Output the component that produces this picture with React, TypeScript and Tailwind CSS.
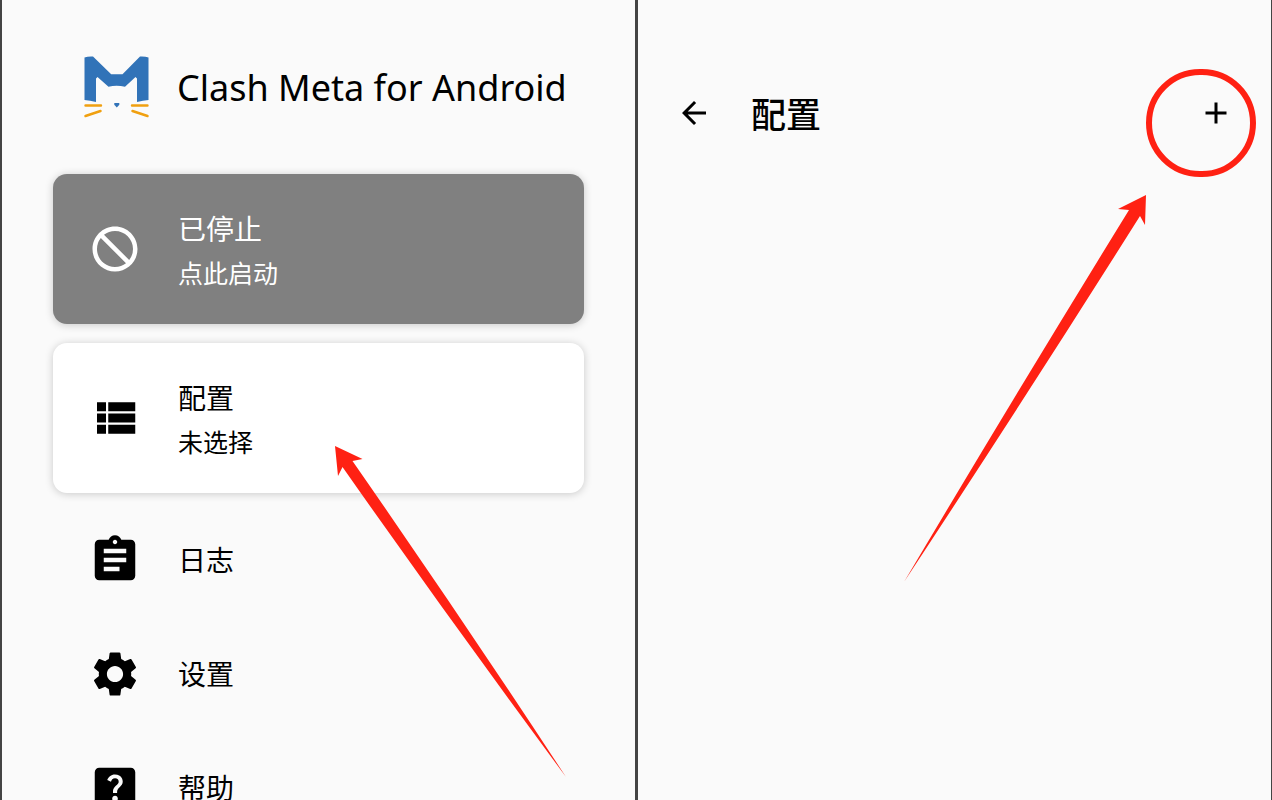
import type { ReactNode } from "react";
import { MdArrowBack, MdAdd, MdBlock, MdHelpCenter, MdSettings } from "react-icons/md";

type IconProps = { className?: string };

type MenuItem = {
  label: string;
  icon: React.ComponentType<IconProps>;
};

function StoppedIcon({ className = "" }: IconProps) {
  return <MdBlock className={`-scale-x-100 ${className}`} aria-hidden="true" />;
}

function ProfilesIcon({ className }: IconProps) {
  return (
    <svg viewBox="0 0 24 24" className={className} fill="currentColor" aria-hidden="true">
      <path d="M4 14h4v-4H4v4zm0 5h4v-4H4v4zM4 9h4V5H4v4zm5 5h12v-4H9v4zm0 5h12v-4H9v4zM9 5v4h12V5H9z" />
    </svg>
  );
}

function LogsIcon({ className }: IconProps) {
  return (
    <svg viewBox="0 0 24 24" className={className} fill="currentColor" aria-hidden="true">
      <path d="M19 3h-4.180C14.400 1.840 13.300 1 12 1c-1.300 0-2.400.840-2.820 2H5c-1.100 0-2 .900-2 2v14c0 1.100.900 2 2 2h14c1.100 0 2-.900 2-2V5c0-1.100-.900-2-2-2zm-7 0c.550 0 1 .450 1 1s-.450 1-1 1-1-.450-1-1 .450-1 1-1zm2 14H7v-2h7v2zm3-4H7v-2h10v2zm0-4H7V7h10v2z" />
    </svg>
  );
}

const MENU: MenuItem[] = [
  { label: "日志", icon: LogsIcon },
  { label: "设置", icon: MdSettings },
  { label: "帮助", icon: MdHelpCenter },
];

function Logo() {
  return (
    <svg viewBox="0 0 65 64" className="h-16 w-[65px] shrink-0" aria-hidden="true">
      <path
        d="M0.5 2.500 Q4 1.300 9 1.600 L27.200 19.300 H38.500 L56 1.600 Q61 1.300 64.500 2.500 V45 Q59 45.500 53 47 V23.500 L51.500 22 L41 31.800 Q32.500 29.500 24.500 31.800 L13.500 22 L12 23.500 V47 Q6 45.500 0.500 45 Z"
        fill="#3173b8"
      />
      <path d="M30.300 48 h5 v1.800 l-2.500 2.700 l-2.500 -2.700 Z" fill="#3173b8" />
      <path
        d="M1.500 50.500 H17 M48 50.500 H63.500 M1.500 61 L16.500 56 M48.500 56 L63.500 61"
        stroke="#f0a010"
        strokeWidth="2.400"
        strokeLinecap="round"
      />
    </svg>
  );
}

function StatusCard({
  title,
  subtitle,
  icon: Icon,
  className,
}: {
  title: string;
  subtitle: string;
  icon: React.ComponentType<IconProps>;
  className: string;
}) {
  return (
    <button
      type="button"
      className={`flex w-full items-center gap-9 rounded-[14px] px-[35px] py-[31px] text-left shadow-[0_1px_8px_rgba(0,0,0,0.2)] ${className}`}
    >
      <Icon className="size-[54px] shrink-0" />
      <span className="flex flex-col">
        <span className="text-[28px] leading-[48px]">{title}</span>
        <span className="text-[25px] leading-10">{subtitle}</span>
      </span>
    </button>
  );
}

function Screen({ children }: { children: ReactNode }) {
  return <section className="relative min-w-0 flex-1 bg-[#fafafa]">{children}</section>;
}

export default function App() {
  return (
    <main className="flex h-screen gap-[3px] overflow-hidden bg-[#444] pr-px pl-0.5 font-['Noto_Sans','Noto_Sans_CJK_SC',sans-serif] text-black">
      <Screen>
        <div className="px-[51px]">
          <header className="flex h-[174px] items-center gap-7 pl-[31px]">
            <Logo />
            <h1 className="pt-0.5 text-4xl whitespace-nowrap">Clash Meta for Android</h1>
          </header>

          <div className="flex flex-col gap-[19px]">
            <StatusCard title="已停止" subtitle="点此启动" icon={StoppedIcon} className="bg-[#808080] text-white" />
            <StatusCard title="配置" subtitle="未选择" icon={ProfilesIcon} className="bg-white" />
          </div>

          <nav className="mt-2.5">
            {MENU.map(({ label, icon: Icon }) => (
              <button
                key={label}
                type="button"
                className="flex h-[114px] w-full items-center gap-9 px-[35px] text-left"
              >
                <Icon className="size-[54px] shrink-0" />
                <span className="text-[28px]">{label}</span>
              </button>
            ))}
          </nav>
        </div>

        {/* Pointer to the profile card */}
        <svg
          viewBox="0 0 232 332"
          className="pointer-events-none absolute top-[446px] left-[333px] h-[332px] w-[232px]"
          aria-hidden="true"
        >
          <path d="M0 0 L27.500 13 L17.500 15 Q126 171 231 331 Q117 177 7.500 21 L3 30 Z" fill="#ff2113" />
        </svg>
      </Screen>

      <Screen>
        <header className="flex items-center pt-[84px] pr-[37px] pl-[38px]">
          <button type="button" aria-label="返回">
            <MdArrowBack className="size-9" aria-hidden="true" />
          </button>
          <h2 className="ml-[39px] flex-1 pt-1 text-[35px] leading-[54px] font-medium">配置</h2>
          <button type="button" aria-label="添加">
            <MdAdd className="size-9" aria-hidden="true" />
          </button>
        </header>

        {/* Highlight around the add button */}
        <div className="pointer-events-none absolute top-[69px] right-[15px] h-[108px] w-[110px] rounded-full border-6 border-[#ff2113]" />
        <svg
          viewBox="0 0 242 387"
          className="pointer-events-none absolute top-[195px] right-[125px] h-[387px] w-[242px]"
          aria-hidden="true"
        >
          <path d="M242 0 L241 30 L236 21 Q120 205 0 387 Q111 200 225 15 L214 14 Z" fill="#ff2113" />
        </svg>
      </Screen>
    </main>
  );
}
